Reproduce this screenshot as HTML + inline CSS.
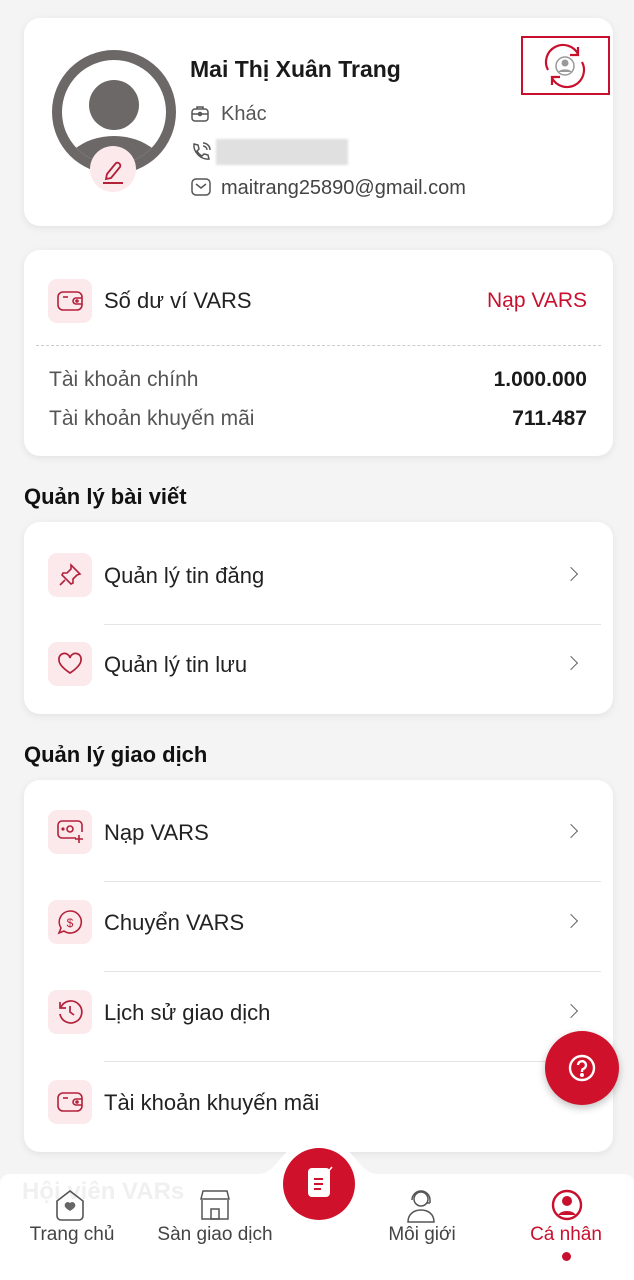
<!DOCTYPE html>
<html><head><meta charset="utf-8"><style>
*{box-sizing:border-box;margin:0;padding:0}
body{width:634px;height:1280px;background:#f4f4f4;font-family:"Liberation Sans",sans-serif;position:relative;overflow:hidden;color:#1a1a1a}
.card{position:absolute;left:24px;width:589px;background:#fff;border-radius:16px;box-shadow:0 2px 8px rgba(0,0,0,.08)}
.ib{position:absolute;left:24px;width:44px;height:44px;background:#fbe9ec;border-radius:9px;display:flex;align-items:center;justify-content:center}
.t{position:absolute;left:80px;font-size:22px;color:#222}
.chev{position:absolute;right:37px;width:10px;height:10px;border-right:1.6px solid #666;border-top:1.6px solid #666;transform:rotate(45deg)}
.div{position:absolute;left:80px;right:12px;height:1px;background:#e4e4e4}
h2{position:absolute;left:24px;font-size:22px;font-weight:bold;color:#111}
.nav{position:absolute;text-align:center;font-size:19px;color:#444}
</style></head><body>

<div class="card" style="top:18px;height:208px">
  <div style="position:absolute;left:28px;top:32px;width:124px;height:124px;border-radius:50%;background:#6d6868;overflow:hidden">
    <div style="position:absolute;left:10px;top:10px;width:104px;height:104px;border-radius:50%;background:#fff;overflow:hidden">
      <div style="position:absolute;left:27px;top:20px;width:50px;height:50px;border-radius:50%;background:#6d6868"></div>
      <div style="position:absolute;left:-4px;top:76px;width:112px;height:90px;border-radius:50%;background:#6d6868"></div>
    </div>
  </div>
  <div style="position:absolute;left:66px;top:128px;width:46px;height:46px;border-radius:50%;background:#fbe9ec">
    <svg width="46" height="46" viewBox="0 0 46 46"><path d="M17 28 L26 17 a3 3 0 0 1 4 4 L21 32 L16 33 Z" fill="none" stroke="#b3203a" stroke-width="1.8"/><line x1="13" y1="37" x2="33" y2="37" stroke="#b3203a" stroke-width="2"/></svg>
  </div>
  <div style="position:absolute;left:166px;top:38px;font-size:23px;font-weight:bold">Mai Thị Xuân Trang</div>
  <svg style="position:absolute;left:166px;top:86px" width="20" height="20" viewBox="0 0 20 20" fill="none" stroke="#555" stroke-width="1.5"><rect x="2" y="5" width="16" height="12" rx="3"/><path d="M7 5V3h6v2M2 10h16"/><circle cx="10" cy="10" r="1.5"/></svg>
  <div style="position:absolute;left:197px;top:85px;font-size:20px;color:#555">Khác</div>
  <svg style="position:absolute;left:166px;top:123px" width="22" height="22" viewBox="0 0 22 22" fill="none" stroke="#555" stroke-width="1.5"><path d="M4 3l4 1 1 4-2 2c1 2 3 4 5 5l2-2 4 1 1 4c-8 1-16-7-15-15z"/><path d="M13 2a7 7 0 0 1 7 7M13 5a4 4 0 0 1 4 4"/></svg>
  <div style="position:absolute;left:192px;top:121px;width:132px;height:26px;background:#e0e0e0;filter:blur(1px)"></div>
  <svg style="position:absolute;left:166px;top:159px" width="22" height="20" viewBox="0 0 22 20" fill="none" stroke="#555" stroke-width="1.5"><rect x="2" y="2" width="18" height="16" rx="4"/><path d="M6 7l5 4 5-4"/></svg>
  <div style="position:absolute;left:197px;top:159px;font-size:20px;color:#444">maitrang25890@gmail.com</div>
  <div style="position:absolute;left:497px;top:18px;width:89px;height:59px;border:2px solid #c8102e"></div>
  <svg style="position:absolute;left:516px;top:24px" width="50" height="48" viewBox="0 0 50 48" fill="none" stroke="#c8102e" stroke-width="2.2"><path d="M8 28A17 17 0 0 1 38 12"/><path d="M38 5v8h-8"/><path d="M42 20A17 17 0 0 1 12 36"/><path d="M12 43v-8h8"/><circle cx="25" cy="24" r="9" stroke="#999" stroke-width="1.5"/><circle cx="25" cy="21" r="3.5" fill="#999" stroke="none"/><path d="M18 30a8 5 0 0 1 14 0" fill="#999" stroke="none"/></svg>
</div>

<div class="card" style="top:250px;height:206px">
  <div class="ib" style="top:29px"><svg width="28" height="22" viewBox="0 0 28 22" fill="none" stroke="#b3203a" stroke-width="1.6"><rect x="2" y="2" width="24" height="18" rx="5"/><path d="M26 8h-6a3 3 0 0 0 0 6h6"/><circle cx="21" cy="11" r="1"/><path d="M7 7h5"/></svg></div>
  <div class="t" style="top:38px">Số dư ví VARS</div>
  <div style="position:absolute;right:26px;top:39px;font-size:21px;color:#c8102e">Nạp VARS</div>
  <div style="position:absolute;left:12px;right:12px;top:95px;border-top:1px dashed #ccc"></div>
  <div style="position:absolute;left:25px;top:118px;font-size:21px;color:#555">Tài khoản chính</div>
  <div style="position:absolute;right:26px;top:118px;font-size:21px;font-weight:bold">1.000.000</div>
  <div style="position:absolute;left:25px;top:157px;font-size:21px;color:#555">Tài khoản khuyến mãi</div>
  <div style="position:absolute;right:26px;top:157px;font-size:21px;font-weight:bold">711.487</div>
</div>

<h2 style="top:484px">Quản lý bài viết</h2>
<div class="card" style="top:522px;height:192px">
  <div class="ib" style="top:31px"><svg width="26" height="26" viewBox="0 0 26 26" fill="none" stroke="#b3203a" stroke-width="1.6"><path d="M14 3l9 9-3 1-4 4 0 4-2 1-9-9 1-2h4l4-4z"/><path d="M8 18l-5 5"/></svg></div>
  <div class="t" style="top:41px">Quản lý tin đăng</div><div class="chev" style="top:47px"></div>
  <div class="div" style="top:102px"></div>
  <div class="ib" style="top:120px"><svg width="26" height="24" viewBox="0 0 26 24" fill="none" stroke="#b3203a" stroke-width="1.7"><path d="M13 21C4 15 2 11 2 8a5.5 5.5 0 0 1 11-2 5.5 5.5 0 0 1 11 2c0 3-2 7-11 13z"/></svg></div>
  <div class="t" style="top:130px">Quản lý tin lưu</div><div class="chev" style="top:136px"></div>
</div>

<h2 style="top:742px">Quản lý giao dịch</h2>
<div class="card" style="top:780px;height:372px">
  <div class="ib" style="top:30px"><svg width="28" height="26" viewBox="0 0 28 26" fill="none" stroke="#b3203a" stroke-width="1.6"><path d="M20 19H6a4 4 0 0 1-4-4V6a4 4 0 0 1 4-4h16a4 4 0 0 1 4 4v7"/><circle cx="14" cy="10" r="3"/><circle cx="7" cy="10" r=".8" fill="#b3203a"/><path d="M23 16v8M19 20h8"/></svg></div>
  <div class="t" style="top:40px">Nạp VARS</div><div class="chev" style="top:46px"></div>
  <div class="div" style="top:101px"></div>
  <div class="ib" style="top:120px"><svg width="28" height="28" viewBox="0 0 28 28" fill="none" stroke="#b3203a" stroke-width="1.6"><path d="M14 3a11 11 0 1 1-6 20l-5 2 2-5A11 11 0 0 1 14 3z"/><text x="14" y="19" font-size="12" text-anchor="middle" fill="#b3203a" stroke="none" font-family="Liberation Sans">$</text></svg></div>
  <div class="t" style="top:130px">Chuyển VARS</div><div class="chev" style="top:136px"></div>
  <div class="div" style="top:191px"></div>
  <div class="ib" style="top:210px"><svg width="28" height="28" viewBox="0 0 28 28" fill="none" stroke="#b3203a" stroke-width="1.7"><path d="M5 9A11 11 0 1 1 4 16"/><path d="M4 4v6h6"/><path d="M14 8v6l4 3"/></svg></div>
  <div class="t" style="top:220px">Lịch sử giao dịch</div><div class="chev" style="top:226px"></div>
  <div class="div" style="top:281px"></div>
  <div class="ib" style="top:300px"><svg width="28" height="22" viewBox="0 0 28 22" fill="none" stroke="#b3203a" stroke-width="1.6"><rect x="2" y="2" width="24" height="18" rx="5"/><path d="M26 8h-6a3 3 0 0 0 0 6h6"/><circle cx="21" cy="11" r="1"/><path d="M7 7h5"/></svg></div>
  <div class="t" style="top:310px">Tài khoản khuyến mãi</div>
</div>

<div style="position:absolute;left:545px;top:1031px;width:74px;height:74px;border-radius:50%;background:#d0112b;box-shadow:0 3px 8px rgba(0,0,0,.25)">
  <svg width="74" height="74" viewBox="0 0 74 74" fill="none" stroke="#fff" stroke-width="2.4"><circle cx="37" cy="37" r="12"/><path d="M33 34a4 4 0 1 1 5 4c-1 .5-1 1.5-1 3"/><circle cx="37" cy="44" r=".8" fill="#fff"/></svg>
</div>

<svg style="position:absolute;left:0;top:1130px" width="634" height="150" viewBox="0 0 634 150"><path d="M0 54 Q0 44 12 44 H258 C280 44 280 10 318 10 C356 10 356 44 378 44 H622 Q634 44 634 54 V150 H0Z" fill="#fff" fill-opacity=".96"/></svg>
<div style="position:absolute;left:22px;top:1178px;font-size:24px;font-weight:bold;color:#f0f0f0">Hội viên VARs</div>
<div style="position:absolute;left:283px;top:1148px;width:72px;height:72px;border-radius:50%;background:#d0112b">
  <svg width="72" height="72" viewBox="0 0 72 72"><rect x="25" y="20" width="22" height="29" rx="4" fill="#fff"/><path d="M31 31h9M31 36h9M31 41h7" stroke="#d0112b" stroke-width="2"/><path d="M41 22l3 3 5-6" stroke="#fff" stroke-width="1.5" fill="none"/></svg>
</div>
<svg style="position:absolute;left:54px;top:1188px" width="32" height="34" viewBox="0 0 32 34" fill="none" stroke="#555" stroke-width="1.6"><path d="M3 13L16 3l13 10v15a4 4 0 0 1-4 4H7a4 4 0 0 1-4-4z"/><path d="M16 23c-5-3-6-5-5-7a3 3 0 0 1 5-1 3 3 0 0 1 5 1c1 2 0 4-5 7z" fill="#666" stroke="none"/></svg>
<div class="nav" style="left:22px;top:1224px;width:100px">Trang chủ</div>
<svg style="position:absolute;left:199px;top:1188px" width="32" height="34" viewBox="0 0 32 34" fill="none" stroke="#555" stroke-width="1.5"><path d="M4 3h24l2 8H2z"/><path d="M3 12v19h26V12"/><rect x="12" y="21" width="8" height="10"/></svg>
<div class="nav" style="left:150px;top:1224px;width:130px">Sàn giao dịch</div>
<svg style="position:absolute;left:404px;top:1186px" width="34" height="38" viewBox="0 0 34 38" fill="none" stroke="#555" stroke-width="1.5"><circle cx="17" cy="13" r="7"/><path d="M8 14a9 9 0 0 1 18 0v3M26 17h-3"/><path d="M4 36c0-8 6-12 13-12s13 4 13 12z"/></svg>
<div class="nav" style="left:372px;top:1224px;width:100px">Môi giới</div>
<svg style="position:absolute;left:550px;top:1188px" width="34" height="34" viewBox="0 0 34 34"><circle cx="17" cy="17" r="14" fill="none" stroke="#c8102e" stroke-width="2.4"/><circle cx="17" cy="13" r="5" fill="#c8102e"/><path d="M8 27a10 7 0 0 1 18 0" fill="#c8102e"/></svg>
<div class="nav" style="left:516px;top:1224px;width:100px;color:#c8102e">Cá nhân</div>
<div style="position:absolute;left:562px;top:1252px;width:9px;height:9px;border-radius:50%;background:#c8102e"></div>
</body></html>
